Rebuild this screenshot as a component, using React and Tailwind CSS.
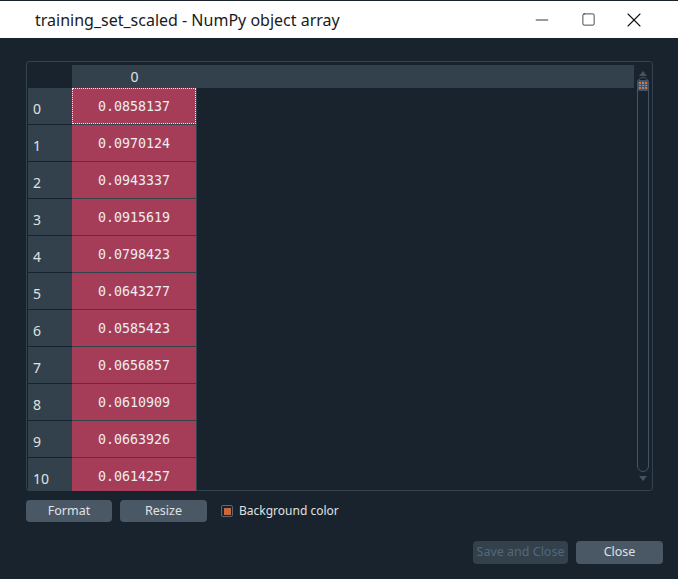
import { Minus, Square, X } from "lucide-react";

const values = [
  "0.0858137",
  "0.0970124",
  "0.0943337",
  "0.0915619",
  "0.0798423",
  "0.0643277",
  "0.0585423",
  "0.0656857",
  "0.0610909",
  "0.0663926",
  "0.0614257",
];

const ui = { fontFamily: '"Noto Sans", "Open Sans", sans-serif' };
const mono = { fontFamily: '"DejaVu Sans Mono", "Liberation Mono", monospace' };

const App = () => {
  return (
    <div className="w-[678px] h-[579px] bg-[#19232d] flex flex-col overflow-hidden" style={ui}>
      {/* Title bar */}
      <div className="h-[38px] bg-white border-t border-[#19232d] flex items-center shrink-0">
        <span className="pl-[35px] text-[16px] text-[#1a1a1a] flex-1">
          training_set_scaled - NumPy object array
        </span>
        <div className="flex h-full pr-[21px]">
          <button className="w-[46px] h-full flex items-center justify-center text-[#111]">
            <Minus className="w-[20px] h-[20px]" strokeWidth={1} absoluteStrokeWidth />
          </button>
          <button className="w-[46px] h-full flex items-center justify-center text-[#111]">
            <Square className="w-[15px] h-[15px]" strokeWidth={1.2} absoluteStrokeWidth />
          </button>
          <button className="w-[46px] h-full flex items-center justify-center text-[#111]">
            <X className="w-[24px] h-[24px]" strokeWidth={1.1} absoluteStrokeWidth />
          </button>
        </div>
      </div>

      {/* Table panel */}
      <div className="mt-[23px] ml-[26px] w-[627px] h-[430px] border border-[#32414b] rounded-[3px] pl-[1px] flex">
        <div className="w-[606px] h-[426px] mt-[3px] overflow-hidden flex flex-col">
          {/* header */}
          <div className="flex h-[23px] shrink-0">
            <div className="w-[44px] bg-[#19232d]" />
            <div className="flex-1 bg-[#32414b] flex">
              <div className="w-[125px] flex items-center justify-center text-[14px] text-[#e0e1e3]">0</div>
            </div>
          </div>
          {values.map((v, i) => (
            <div key={i} className="flex h-[37px] shrink-0">
              <div className="w-[44px] bg-[#32414b] border-b border-[#19232d] flex items-center pl-[5px] pt-[4px] text-[14px] text-[#e0e1e3]">
                {i}
              </div>
              <div className="w-[125px] bg-[#a53d59] border-b border-r border-[#32414b] relative flex items-center justify-center pt-[2px] text-[13.3px] text-[#eceef0]" style={mono}>
                {i === 0 && (
                  <div className="absolute inset-0 border border-dotted border-[#f0f0f0]" />
                )}
                {v}
              </div>
            </div>
          ))}
        </div>

        {/* scrollbar */}
        <div className="w-[16px] h-full flex flex-col items-center ml-[1px] pt-[9px] pb-[9px]">
          <svg width="8" height="5" viewBox="0 0 8 5">
            <path d="M4 0 L8 5 L0 5 Z" fill="#455364" />
          </svg>
          <div className="w-[12px] flex-1 border border-[#455364] rounded-[6px] mt-[1px] relative">
            <div className="absolute -left-[1px] top-[2px] w-[12px] h-[11px] bg-[#455364] rounded-[2px] grid grid-cols-3 gap-[1px] p-[2px]">
              {[0, 1, 2, 3, 4, 5, 6, 7, 8].map((d) => (
                <span key={d} className={d % 2 ? "bg-[#8794a3]" : "bg-[#e0703a]"} />
              ))}
            </div>
          </div>
          <svg width="8" height="5" viewBox="0 0 8 5" className="mt-[4px]">
            <path d="M0 0 L8 0 L4 5 Z" fill="#455364" />
          </svg>
        </div>
      </div>

      {/* options row */}
      <div className="flex items-center ml-[26px] mt-[9px] h-[22px]">
        <button className="w-[86px] h-[22px] bg-[#4a5866] rounded-[4px] text-[12.5px] text-[#e0e1e3]">Format</button>
        <button className="w-[87px] h-[22px] bg-[#4a5866] rounded-[4px] text-[12.5px] text-[#e0e1e3] ml-[8px]">Resize</button>
        <div className="ml-[14px] w-[12px] h-[12px] border border-[#5a6776] rounded-[2px] flex items-center justify-center bg-[#19232d]">
          <div className="w-[7px] h-[7px] bg-[#c8683e]" />
        </div>
        <span className="ml-[6px] text-[12px] text-[#e0e1e3]">Background color</span>
      </div>

      {/* bottom buttons */}
      <div className="flex justify-end gap-[8px] mr-[15px] mt-[19px]">
        <button className="w-[95px] h-[23px] bg-[#32414b] rounded-[4px] text-[12.5px] text-[#54687a]">Save and Close</button>
        <button className="w-[87px] h-[23px] bg-[#4a5866] rounded-[4px] text-[12.5px] text-[#e0e1e3]">Close</button>
      </div>
    </div>
  );
};

export default App;
